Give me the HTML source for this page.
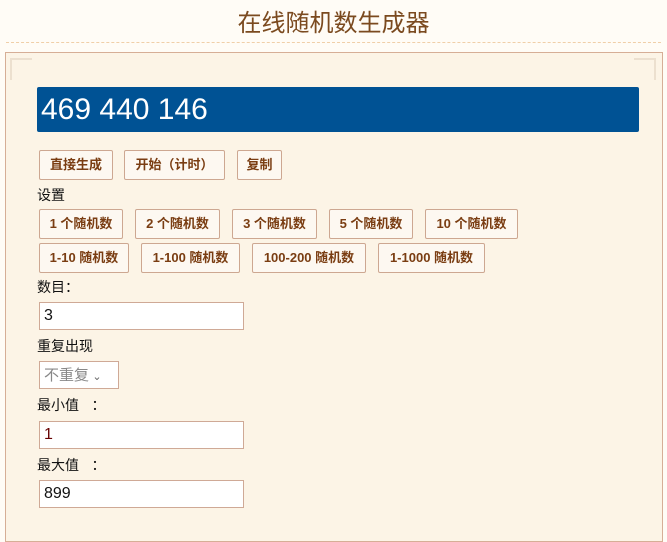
<!DOCTYPE html>
<html><head><meta charset="utf-8"><style>
*{box-sizing:border-box;margin:0;padding:0}
body{width:667px;height:524px;overflow:hidden;background:#fffcf6;font-family:"Liberation Sans","Noto Sans CJK SC",sans-serif;position:relative}
.a{position:absolute}
h1{position:absolute;top:6px;left:0;width:667px;text-align:center;font-weight:normal;font-size:24px;color:#7b4a1f;font-family:"Noto Sans CJK SC",sans-serif;line-height:30px}
.dash{top:42px;left:6px;width:655px;border-top:1px dashed #f0cfa8}
.panel{top:52px;left:5px;width:658px;height:490px;border:1px solid #d6ae96;background:#fcf4e6}
.res{left:37px;top:87px;width:602px;height:45px;background:#005294;border-radius:2px;color:#fff;font-size:30px;line-height:45px;padding-left:4px}
.b{position:absolute;height:30px;border:1px solid #cda791;background:#fdf8f1;border-radius:2px;color:#7a3d12;font-weight:bold;font-size:13px;text-align:center;line-height:28px;font-family:"Liberation Sans","Noto Sans CJK SC",sans-serif}
.l{position:absolute;left:37px;font-size:14px;color:#111;font-family:"Noto Sans CJK SC",sans-serif;line-height:18px;white-space:pre}
.in{position:absolute;left:39px;width:205px;height:28px;border:1px solid #cfa996;background:#fff;font-size:16px;line-height:26px;padding-left:4px;color:#111}
.corner{width:22px;height:22px;border:2px solid #ece0cf;border-right:none;border-bottom:none}
</style></head><body>
<h1>在线随机数生成器</h1>
<div class="a dash"></div>
<div class="a panel"></div>
<div class="a corner" style="left:10px;top:58px"></div>
<div class="a corner" style="left:634px;top:58px;transform:scaleX(-1)"></div>
<div class="a res">469 440 146</div>
<div class="b" style="left:39px;top:150px;width:74px">直接生成</div>
<div class="b" style="left:124px;top:150px;width:101px">开始（计时）</div>
<div class="b" style="left:237px;top:150px;width:45px">复制</div>
<div class="l" style="top:186px">设置</div>
<div class="b" style="left:39px;top:209px;width:84px">1 个随机数</div>
<div class="b" style="left:135px;top:209px;width:85px">2 个随机数</div>
<div class="b" style="left:232px;top:209px;width:85px">3 个随机数</div>
<div class="b" style="left:329px;top:209px;width:84px">5 个随机数</div>
<div class="b" style="left:425px;top:209px;width:93px">10 个随机数</div>
<div class="b" style="left:39px;top:243px;width:90px">1-10 随机数</div>
<div class="b" style="left:141px;top:243px;width:99px">1-100 随机数</div>
<div class="b" style="left:252px;top:243px;width:114px">100-200 随机数</div>
<div class="b" style="left:378px;top:243px;width:107px">1-1000 随机数</div>
<div class="l" style="top:278px">数目：</div>
<div class="in" style="top:302px">3</div>
<div class="l" style="top:337px">重复出现</div>
<div class="in" style="top:361px;width:80px;color:#888;font-family:'Noto Sans CJK SC',sans-serif;font-size:15px">不重复 <span style="font-size:11px;color:#666">&#8964;</span></div>
<div class="l" style="top:396px">最小值    ：</div>
<div class="in" style="top:421px;color:#600">1</div>
<div class="l" style="top:456px">最大值    ：</div>
<div class="in" style="top:480px">899</div>
</body></html>
